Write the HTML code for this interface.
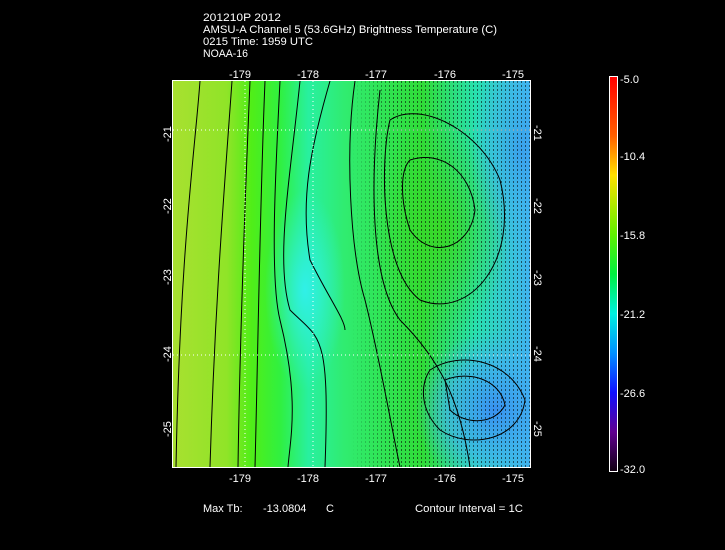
<!DOCTYPE html>
<html><head><style>
body{margin:0;background:#000;width:725px;height:550px;overflow:hidden;position:relative}
</style></head><body>
<svg width="725" height="550" style="position:absolute;left:0;top:0">
<defs>
<linearGradient id="h" x1="0" x2="1" y1="0" y2="0">
<stop offset="0" stop-color="#a8e030"/><stop offset="0.15" stop-color="#90e428"/>
<stop offset="0.22" stop-color="#50ee18"/><stop offset="0.3" stop-color="#30f040"/>
<stop offset="0.38" stop-color="#28f0a0"/><stop offset="0.48" stop-color="#30ec70"/>
<stop offset="0.7" stop-color="#30dc38"/><stop offset="0.85" stop-color="#28e0b0"/><stop offset="1" stop-color="#40b4f0"/>
</linearGradient>
<radialGradient id="c1"><stop offset="0" stop-color="#30f0e8"/><stop offset="1" stop-color="#30f0e0" stop-opacity="0"/></radialGradient>
<radialGradient id="b1"><stop offset="0" stop-color="#3890f0"/><stop offset="0.6" stop-color="#40b0f0" stop-opacity="0.7"/><stop offset="1" stop-color="#40b0f0" stop-opacity="0"/></radialGradient>
<radialGradient id="g1"><stop offset="0" stop-color="#38d828"/><stop offset="1" stop-color="#38d828" stop-opacity="0"/></radialGradient>
<linearGradient id="cb" x1="0" x2="0" y1="0" y2="1">
<stop offset="0" stop-color="#ff0000"/><stop offset="0.15" stop-color="#ff6000"/><stop offset="0.25" stop-color="#ffe000"/>
<stop offset="0.4" stop-color="#60f000"/><stop offset="0.5" stop-color="#00f040"/><stop offset="0.6" stop-color="#00f0e0"/>
<stop offset="0.7" stop-color="#0090ff"/><stop offset="0.8" stop-color="#1010ff"/><stop offset="0.9" stop-color="#600090"/><stop offset="1" stop-color="#100010"/>
</linearGradient>
<pattern id="hp" width="4" height="4" patternUnits="userSpaceOnUse"><rect x="1" y="1" width="1" height="2" fill="#000" opacity="0.55"/></pattern>
<linearGradient id="hm" x1="0" x2="1"><stop offset="0.5" stop-color="#fff" stop-opacity="0"/><stop offset="0.62" stop-color="#fff" stop-opacity="1"/></linearGradient>
<mask id="m"><rect x="173" y="81" width="357" height="386" fill="url(#hm)"/></mask>
<clipPath id="cp"><rect x="173" y="81" width="357" height="386"/></clipPath>
</defs>
<g clip-path="url(#cp)">
<rect x="173" y="81" width="357" height="386" fill="url(#h)"/>
<ellipse cx="305" cy="290" rx="40" ry="100" fill="url(#c1)"/>
<ellipse cx="440" cy="230" rx="70" ry="110" fill="url(#g1)"/>
<ellipse cx="495" cy="410" rx="80" ry="80" fill="url(#b1)"/>
<ellipse cx="520" cy="150" rx="50" ry="100" fill="url(#b1)" opacity="0.6"/>
<rect x="173" y="81" width="357" height="386" fill="url(#hp)" mask="url(#m)"/>
<g fill="none" stroke="#000" stroke-width="1">
<path d="M200 81 C195 150 180 250 176 467"/>
<path d="M232 81 C225 180 215 300 210 467"/>
<path d="M250 81 C245 200 240 330 238 467"/>
<path d="M265 81 C260 200 258 350 255 467"/>
<path d="M280 81 C275 180 270 280 280 320 C300 400 290 440 288 467"/>
<path d="M300 81 C290 180 275 260 290 310 C320 340 330 330 325 467"/>
<path d="M330 81 C310 150 300 200 310 260 C330 300 345 320 345 330"/>
<path d="M355 81 C345 150 350 250 365 300 C380 360 390 420 400 467"/>
<path d="M380 90 C370 180 370 280 400 320 C440 360 460 400 470 467"/>
<path d="M390 120 C420 100 480 130 500 180 C520 260 470 320 420 300 C380 270 380 160 390 120Z"/>
<path d="M410 160 C440 150 470 170 475 210 C470 250 430 260 410 230 C400 200 400 170 410 160Z"/>
<path d="M430 370 C460 350 510 360 525 400 C520 440 470 450 440 430 C420 410 420 385 430 370Z"/>
<path d="M445 380 C470 370 500 380 505 405 C495 425 465 425 450 410Z"/>
</g>
<g stroke="#fff" stroke-dasharray="1 3" stroke-width="1">
<line x1="173" y1="130" x2="530" y2="130"/><line x1="173" y1="355" x2="530" y2="355"/>
<line x1="245" y1="81" x2="245" y2="467"/><line x1="313" y1="81" x2="313" y2="467"/>
</g>
</g>
<rect x="172.5" y="80.5" width="358" height="387" fill="none" stroke="#fff"/>
<rect x="609.5" y="76.5" width="8" height="395" fill="url(#cb)" stroke="#fff"/>
<g fill="#fff" font-family="Liberation Sans,sans-serif" font-size="11" lengthAdjust="spacingAndGlyphs">
<text x="203" y="21" textLength="78" lengthAdjust="spacingAndGlyphs">201210P 2012</text>
<text x="203" y="33" textLength="294" lengthAdjust="spacingAndGlyphs">AMSU-A Channel 5 (53.6GHz) Brightness Temperature (C)</text>
<text x="203" y="45" textLength="110" lengthAdjust="spacingAndGlyphs">0215 Time: 1959 UTC</text>
<text x="203" y="57" textLength="45" lengthAdjust="spacingAndGlyphs">NOAA-16</text>
<text x="229" y="78">-179</text><text x="297" y="78">-178</text><text x="365" y="78">-177</text><text x="434" y="78">-176</text><text x="502" y="78">-175</text>
<text x="229" y="482">-179</text><text x="297" y="482">-178</text><text x="365" y="482">-177</text><text x="434" y="482">-176</text><text x="502" y="482">-175</text>
<text transform="translate(171,142) rotate(-90)">-21</text><text transform="translate(171,214) rotate(-90)">-22</text><text transform="translate(171,285) rotate(-90)">-23</text><text transform="translate(171,362) rotate(-90)">-24</text><text transform="translate(171,437) rotate(-90)">-25</text>
<text transform="translate(534,125) rotate(90)">-21</text><text transform="translate(534,198) rotate(90)">-22</text><text transform="translate(534,270) rotate(90)">-23</text><text transform="translate(534,346) rotate(90)">-24</text><text transform="translate(534,421) rotate(90)">-25</text>
<text x="620" y="83">-5.0</text><text x="620" y="160">-10.4</text><text x="620" y="239">-15.8</text><text x="620" y="318">-21.2</text><text x="620" y="397">-26.6</text><text x="620" y="473">-32.0</text>
<text x="203" y="512">Max Tb:</text>
<text x="263" y="512">-13.0804</text><text x="326" y="512">C</text>
<text x="415" y="512" textLength="108" lengthAdjust="spacingAndGlyphs">Contour Interval = 1C</text>
</g>
</svg>
</body></html>
